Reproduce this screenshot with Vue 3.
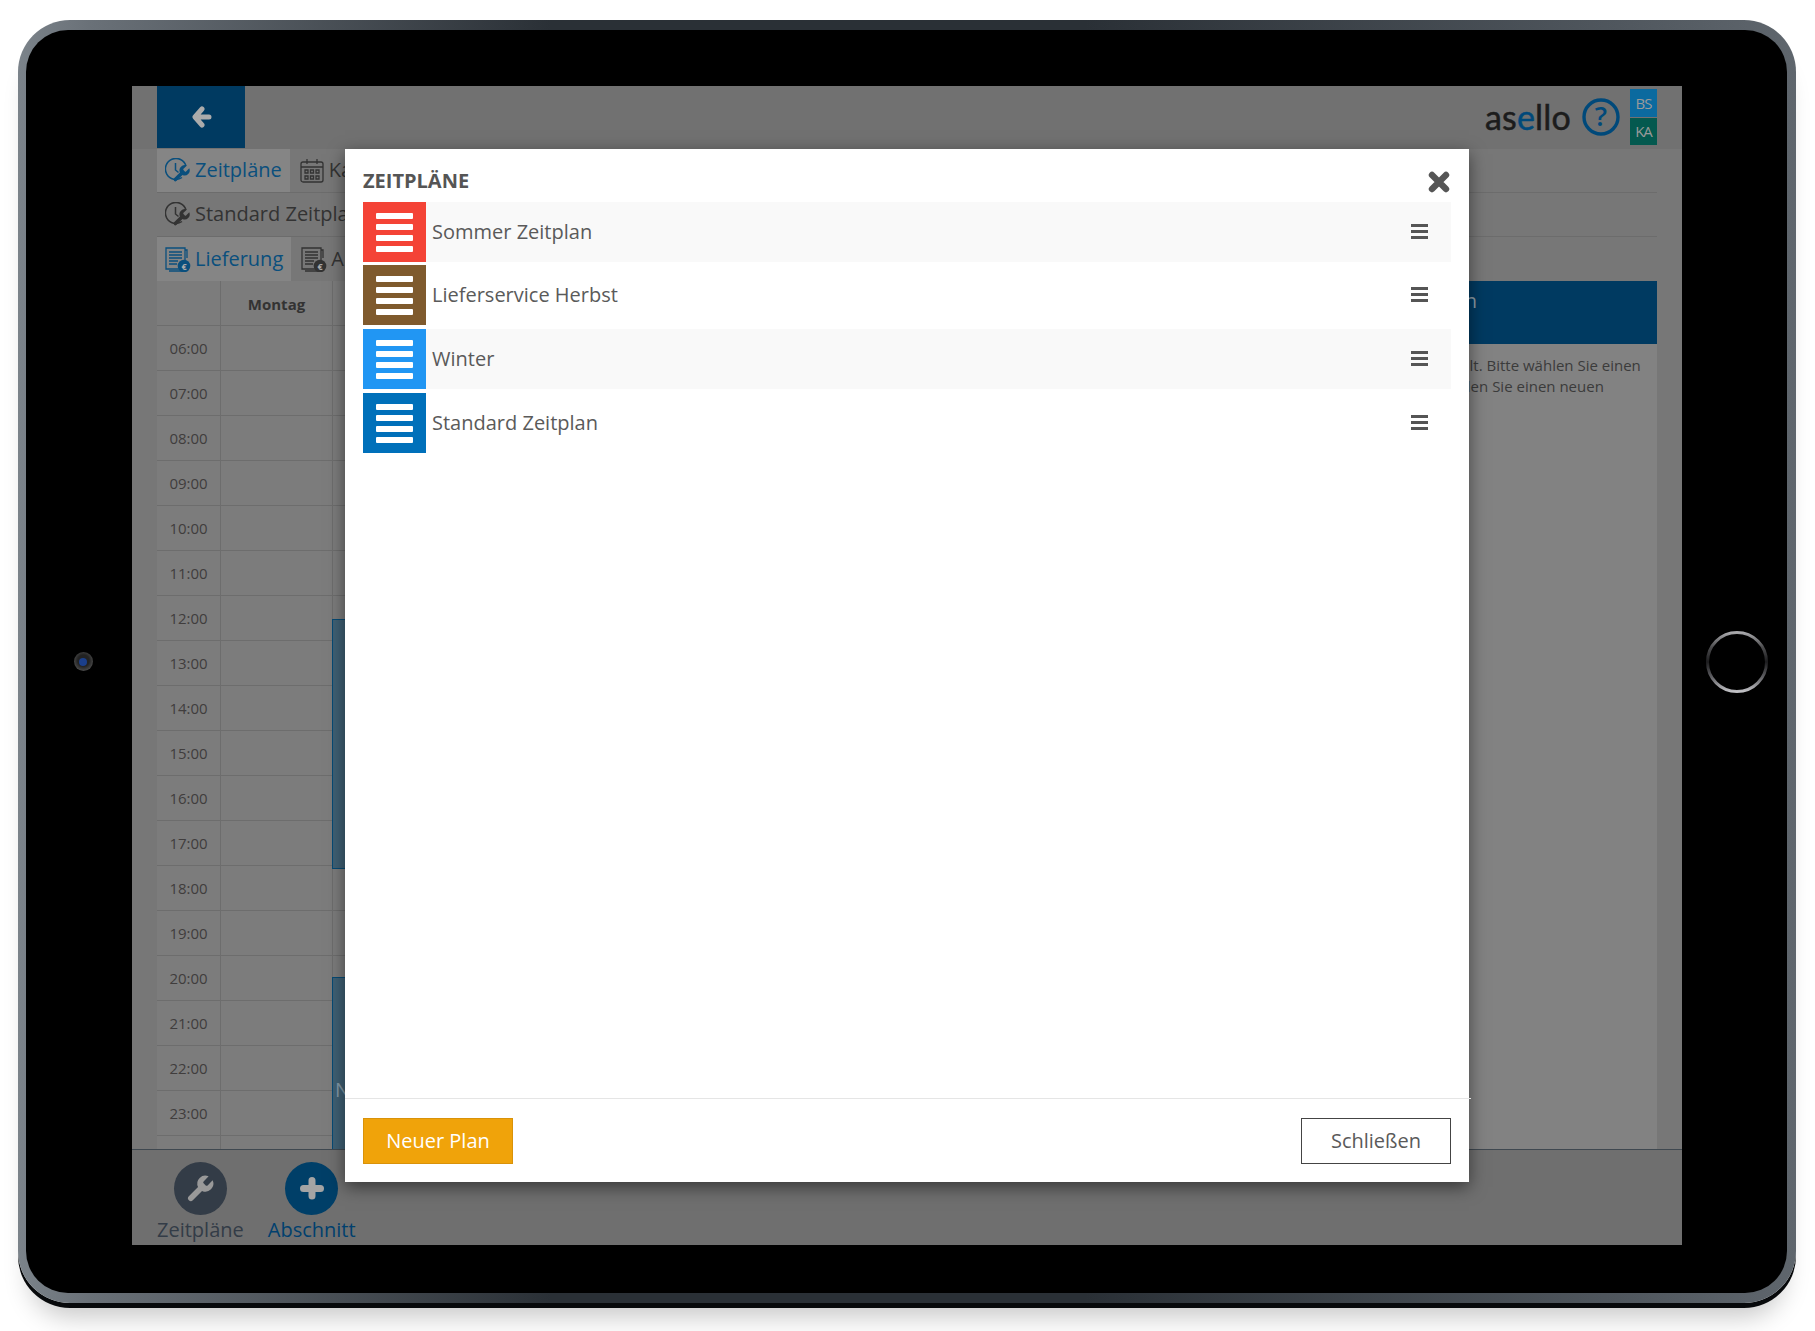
<script setup>
const hours = ['06:00','07:00','08:00','09:00','10:00','11:00','12:00','13:00','14:00','15:00','16:00','17:00','18:00','19:00','20:00','21:00','22:00','23:00','']
const plans = [
  { name: 'Sommer Zeitplan', color: '#f44336' },
  { name: 'Lieferservice Herbst', color: '#7f5a2d' },
  { name: 'Winter', color: '#2196f3' },
  { name: 'Standard Zeitplan', color: '#0070ba' },
]
</script>

<template>
  <div class="page">
    <div class="tablet">
      <div class="bezel">
        <div class="side side-left"><div class="camera"><span class="lens"></span></div></div>
        <div class="screen">
          <header class="topbar">
            <button class="back" aria-label="Zurück">
              <svg width="20" height="22" viewBox="0 0 20 22"><path d="M10 3 3 11l7 8M4 11h13" fill="none" stroke="#ababab" stroke-width="5" stroke-linecap="round" stroke-linejoin="round"/></svg>
            </button>
            <div class="brand">
              <span class="logo">as<b>e</b>llo</span>
              <svg class="help" width="40" height="40" viewBox="0 0 40 40"><circle cx="20" cy="20" r="17" fill="none" stroke="#00497a" stroke-width="3.4"/><text x="20" y="29" text-anchor="middle" class="help-mark">?</text></svg>
              <div class="badges"><span class="bs">BS</span><span class="ka">KA</span></div>
            </div>
          </header>

          <nav class="toolrow line">
            <a class="tab active">
              <svg class="ico" width="26" height="26" viewBox="0 0 26 26"><g fill="none" stroke="#0a4f7d" stroke-width="1.5"><path d="M17 19.5A10.5 10.5 0 1 1 21 8"/><path d="M10.5 5v7l3 2.5"/></g><path transform="translate(6 5.5) scale(.85)" fill="#0a4f7d" d="M14.7 6.3a1 1 0 0 0 0 1.4l1.6 1.6a1 1 0 0 0 1.4 0l3.77-3.77a6 6 0 0 1-7.94 7.94l-6.91 6.91a2.12 2.12 0 0 1-3-3l6.91-6.91a6 6 0 0 1 7.94-7.94l-3.76 3.76z"/></svg>
              Zeitpläne
            </a>
            <a class="tab">
              <svg class="ico" width="25" height="26" viewBox="0 0 25 26"><g fill="none" stroke="#333" stroke-width="1.3"><rect x="1" y="4" width="22" height="20" rx="2"/><path d="M1 9h22M7 1v5M17 1v5"/><path d="M5 12h3v3H5zM10.5 12h3v3h-3zM16 12h3v3h-3zM5 18h3v3H5zM10.5 18h3v3h-3zM16 18h3v3h-3z"/></g></svg>
              Kalender
            </a>
          </nav>
          <div class="toolrow line">
            <a class="tab plain">
              <svg class="ico" width="26" height="26" viewBox="0 0 26 26"><g fill="none" stroke="#333" stroke-width="1.5"><path d="M17 19.5A10.5 10.5 0 1 1 21 8"/><path d="M10.5 5v7l3 2.5"/></g><path transform="translate(6 5.5) scale(.85)" fill="#333" d="M14.7 6.3a1 1 0 0 0 0 1.4l1.6 1.6a1 1 0 0 0 1.4 0l3.77-3.77a6 6 0 0 1-7.94 7.94l-6.91 6.91a2.12 2.12 0 0 1-3-3l6.91-6.91a6 6 0 0 1 7.94-7.94l-3.76 3.76z"/></svg>
              Standard Zeitplan
            </a>
          </div>
          <nav class="toolrow">
            <a class="tab active">
              <svg class="ico" width="26" height="26" viewBox="0 0 26 26"><g fill="none" stroke="#0a4f7d" stroke-width="1.3"><path d="M1 2h19v21H1zM20 4h2v8M4 25h14"/><path d="M4 6h13M4 9h13M4 12h13M4 15h9M4 18h8"/></g><circle cx="19" cy="20" r="6.3" fill="#0a4f7d"/><text x="19" y="23.5" text-anchor="middle" class="euro">€</text></svg>
              Lieferung
            </a>
            <a class="tab">
              <svg class="ico" width="26" height="26" viewBox="0 0 26 26"><g fill="none" stroke="#333" stroke-width="1.3"><path d="M1 2h19v21H1zM20 4h2v8M4 25h14"/><path d="M4 6h13M4 9h13M4 12h13M4 15h9M4 18h8"/></g><circle cx="19" cy="20" r="6.3" fill="#333"/><text x="19" y="23.5" text-anchor="middle" class="euro">€</text></svg>
              Abholung
            </a>
          </nav>

          <main class="content">
            <section class="calendar">
              <div class="cal-row cal-head"><span class="time"></span><span class="day">Montag</span><span class="day">Dienstag</span></div>
              <div v-for="(h, i) in hours" :key="i" class="cal-row"><span class="time">{{ h }}</span><span class="day"></span><span class="day"></span></div>
              <div class="event event-a"></div>
              <div class="event event-b"><span class="event-label">N</span></div>
            </section>
            <aside class="panel">
              <div class="panel-head">Abschnitt bearbeiten</div>
              <p class="panel-text">Es wurde kein Abschnitt gewählt. Bitte wählen Sie einen<br>Abschnitt links aus, oder erstellen Sie einen neuen</p>
            </aside>
          </main>

          <footer class="actions">
            <div class="action">
              <span class="disc disc-dark">
                <svg width="32" height="32" viewBox="0 0 24 24"><path fill="#999" d="M14.7 6.3a1 1 0 0 0 0 1.4l1.6 1.6a1 1 0 0 0 1.4 0l3.77-3.77a6 6 0 0 1-7.94 7.94l-6.91 6.91a2.12 2.12 0 0 1-3-3l6.91-6.91a6 6 0 0 1 7.94-7.94l-3.76 3.76z"/></svg>
              </span>
              <span class="action-label">Zeitpläne</span>
            </div>
            <div class="action blue">
              <span class="disc disc-blue">
                <svg width="26" height="26" viewBox="0 0 26 26"><path d="M13 4.5v15.5M4.5 12.5h17" stroke="#a4a4a4" stroke-width="7" stroke-linecap="round"/></svg>
              </span>
              <span class="action-label">Abschnitt</span>
            </div>
          </footer>

          <div class="backdrop">
            <div class="modal">
              <div class="modal-head">
                <h2 class="modal-title">ZEITPLÄNE</h2>
                <button class="close" aria-label="Schließen">
                  <svg width="22" height="22" viewBox="0 0 22 22"><path d="M4 4l14 14M18 4 4 18" stroke="#555" stroke-width="6.4" stroke-linecap="round"/></svg>
                </button>
              </div>
              <ul class="plans">
                <li v-for="p in plans" :key="p.name" class="plan">
                  <span class="plan-icon" :style="{ background: p.color }"><i></i><i></i><i></i><i></i></span>
                  <span class="plan-name">{{ p.name }}</span>
                  <span class="burger"><i></i><i></i><i></i></span>
                </li>
              </ul>
              <div class="modal-foot">
                <button class="btn btn-primary">Neuer Plan</button>
                <button class="btn btn-ghost">Schließen</button>
              </div>
            </div>
          </div>
        </div>
        <div class="side side-right">
          <svg width="66" height="66" viewBox="0 0 66 66"><defs><linearGradient id="ring" x1="0" y1="0" x2="0" y2="1"><stop offset="0" stop-color="#a8a8ab"/><stop offset=".25" stop-color="#4c4c4e"/><stop offset=".5" stop-color="#1c1c1e"/><stop offset=".75" stop-color="#5e5e62"/><stop offset="1" stop-color="#c0c0c4"/></linearGradient></defs><circle cx="33" cy="33" r="29.5" fill="none" stroke="url(#ring)" stroke-width="3"/></svg>
        </div>
      </div>
    </div>
  </div>
</template>

<style>
html, body { margin: 0; overflow: hidden; background: #fff; }
</style>

<style scoped>
.page {
  width: 1815px; height: 1331px; box-sizing: border-box; padding: 20px 19px 0 18px;
  overflow: hidden; background: #fff; font-family: "Open Sans", "DejaVu Sans", sans-serif;
}
.tablet {
  height: 1283px; box-sizing: border-box; padding: 10px 9px 10px 8px; border-radius: 52px;
  background: linear-gradient(90deg, #7b838a 0%, #6a7178 4%, #2a3036 30%, #2a3036 60%, #50575e 90%, #5f666d 100%);
  box-shadow: 0 5px 0 #07090b, 0 26px 26px -12px rgba(0, 0, 0, .22);
}
.bezel { height: 100%; display: flex; background: #000; border-radius: 42px; overflow: hidden; }
.side { display: flex; align-items: center; justify-content: center; box-sizing: border-box; }
.side-left { width: 106px; padding-left: 8px; }
.side-right { width: 105px; padding-left: 4px; }
.camera {
  width: 19px; height: 19px; border-radius: 50%; display: flex; align-items: center; justify-content: center;
  background: radial-gradient(circle at 50% 45%, #222 0 40%, #6b6b6b 100%);
}
.lens { width: 8px; height: 8px; border-radius: 50%; background: #1b3f8b; }
.screen {
  position: relative; width: 1550px; height: 1159px; margin-top: 56px; overflow: hidden;
  display: flex; flex-direction: column; background: #777; color: #333;
}
.topbar { height: 63px; flex: none; display: flex; justify-content: space-between; padding: 0 25px; background: #717171; }
.back { width: 88px; height: 62px; border: 0; background: #003a61; display: flex; align-items: center; justify-content: center; padding: 0 0 0 2px; }
.brand { display: flex; align-items: flex-start; }
.logo { font-family: Lato, sans-serif; font-size: 34px; line-height: 40px; margin: 11px 10px 0 0; color: #1c1c1c; letter-spacing: .2px; -webkit-text-stroke: .5px currentColor; }
.logo b { font-weight: 400; color: #00497a; }
.help { margin: 11px 9px 0 0; }
.help-mark { font: 600 27px "Open Sans", sans-serif; fill: #00497a; }
.badges { display: flex; flex-direction: column; gap: 1px; margin-top: 3px; width: 27px; }
.badges span { height: 27.5px; display: flex; align-items: center; justify-content: center; font-size: 15px; letter-spacing: -1px; color: #9a9a9a; }
.bs { background: #0b6a9f; }
.ka { background: #04594f; }
.toolrow { height: 44px; flex: none; margin: 0 25px; display: flex; gap: 2px; box-sizing: border-box; }
.toolrow.line { border-bottom: 1px solid #6c6c6c; }
.tab { display: flex; align-items: center; gap: 4px; padding: 0 8px 2px; box-sizing: border-box; font-size: 20px; color: #333; white-space: nowrap; }
.tab.active { background: #858585; color: #0a4f7d; }
.ico { flex: none; margin-top: 2px; }
.euro { font: 700 9px "Open Sans", sans-serif; fill: #aaa; }
.content { flex: 1; min-height: 0; display: flex; padding: 0 25px; overflow: hidden; }
.calendar { position: relative; width: 1043px; flex: none; background: #7c7c7c; }
.cal-row { display: flex; height: 45px; box-sizing: border-box; border-bottom: 1px solid #6d6d6d; }
.cal-head { font-weight: 700; font-size: 15px; padding-top: 0; }
.cal-head .day { padding-top: 2px; }
.time { width: 64px; flex: none; box-sizing: border-box; border-right: 1px solid #6d6d6d; display: flex; align-items: center; justify-content: center; font-size: 15px; color: #403d3d; }
.day { width: 112px; flex: none; box-sizing: border-box; border-right: 1px solid #6d6d6d; display: flex; align-items: center; justify-content: center; }
.event { position: absolute; left: 175px; width: 200px; background: #3f6074; border: 1px solid #064a74; box-sizing: border-box; color: #839aa8; }
.event-a { top: 338px; height: 250px; }
.event-b { top: 696px; height: 200px; }
.event-label { position: absolute; left: 2px; top: 98px; font-size: 20px; }
.panel { flex: 1; background: #828282; min-width: 0; }
.panel-head { height: 63px; box-sizing: border-box; background: #003a61; color: #8a9aa5; font-size: 20px; padding: 6px 0 0 82px; white-space: nowrap; }
.panel-text { margin: 0; padding: 11px 0 0 53px; font-size: 15px; line-height: 21px; color: #3b3b3b; white-space: nowrap; }
.actions { height: 96px; flex: none; box-sizing: border-box; display: flex; gap: 24px; padding: 12px 0 0 25px; background: #6f6f6f; border-top: 1px solid #3f4850; }
.action { display: flex; flex-direction: column; align-items: center; color: #333c47; }
.action.blue { color: #00406e; }
.disc { width: 53px; height: 53px; border-radius: 50%; display: flex; align-items: center; justify-content: center; flex: none; }
.disc-dark { background: #333c47; }
.disc-blue { background: #003f68; }
.action-label { font-size: 20px; line-height: 28px; margin-top: 1px; }
.backdrop { position: absolute; inset: 0; box-sizing: border-box; padding: 63px 213px; display: flex; }
.modal { flex: 1; display: flex; flex-direction: column; background: #fff; box-shadow: 0 5px 16px rgba(0, 0, 0, .5); color: #555; }
.modal-head { height: 53px; flex: none; box-sizing: border-box; display: flex; justify-content: space-between; align-items: flex-start; padding: 19px 19px 0 18px; }
.modal-title { margin: 0; font-size: 20px; line-height: 26px; font-weight: 700; color: #555; }
.close { padding: 0; border: 0; background: none; line-height: 0; margin-top: 3px; }
.plans { flex: 1; margin: 0; padding: 0 18px; list-style: none; display: flex; flex-direction: column; gap: 4px; }
.plan { height: 60px; flex: none; display: flex; align-items: center; }
.plan:first-child { margin-bottom: -1px; }
.plan:nth-child(odd) { background: #f9f9f9; }
.plan-icon { width: 63px; height: 60px; flex: none; box-sizing: border-box; display: flex; flex-direction: column; align-items: center; justify-content: center; gap: 5px; }
.plan-icon i { display: block; width: 37px; height: 6px; border-radius: 1px; background: #fff; }
.plan-name { flex: 1; padding: 0 0 2px 6px; font-size: 20px; color: #5a5a5a; }
.burger { width: 17px; margin: 0 23px 1px 0; display: flex; flex-direction: column; gap: 3px; }
.burger i { display: block; height: 3px; background: #555; }
.modal-foot { flex: none; display: flex; justify-content: space-between; padding: 19px 20px 18px 18px; border-top: 1px solid #e5e5e5; margin-right: -2px; }
.btn { width: 150px; height: 46px; box-sizing: border-box; font: 400 20px "Open Sans", sans-serif; padding: 0 0 2px; }
.btn-primary { background: #f0a30a; border: 1px solid #d99209; color: #fff; }
.btn-ghost { background: #fff; border: 1px solid #444; color: #5a5a5a; }
</style>
